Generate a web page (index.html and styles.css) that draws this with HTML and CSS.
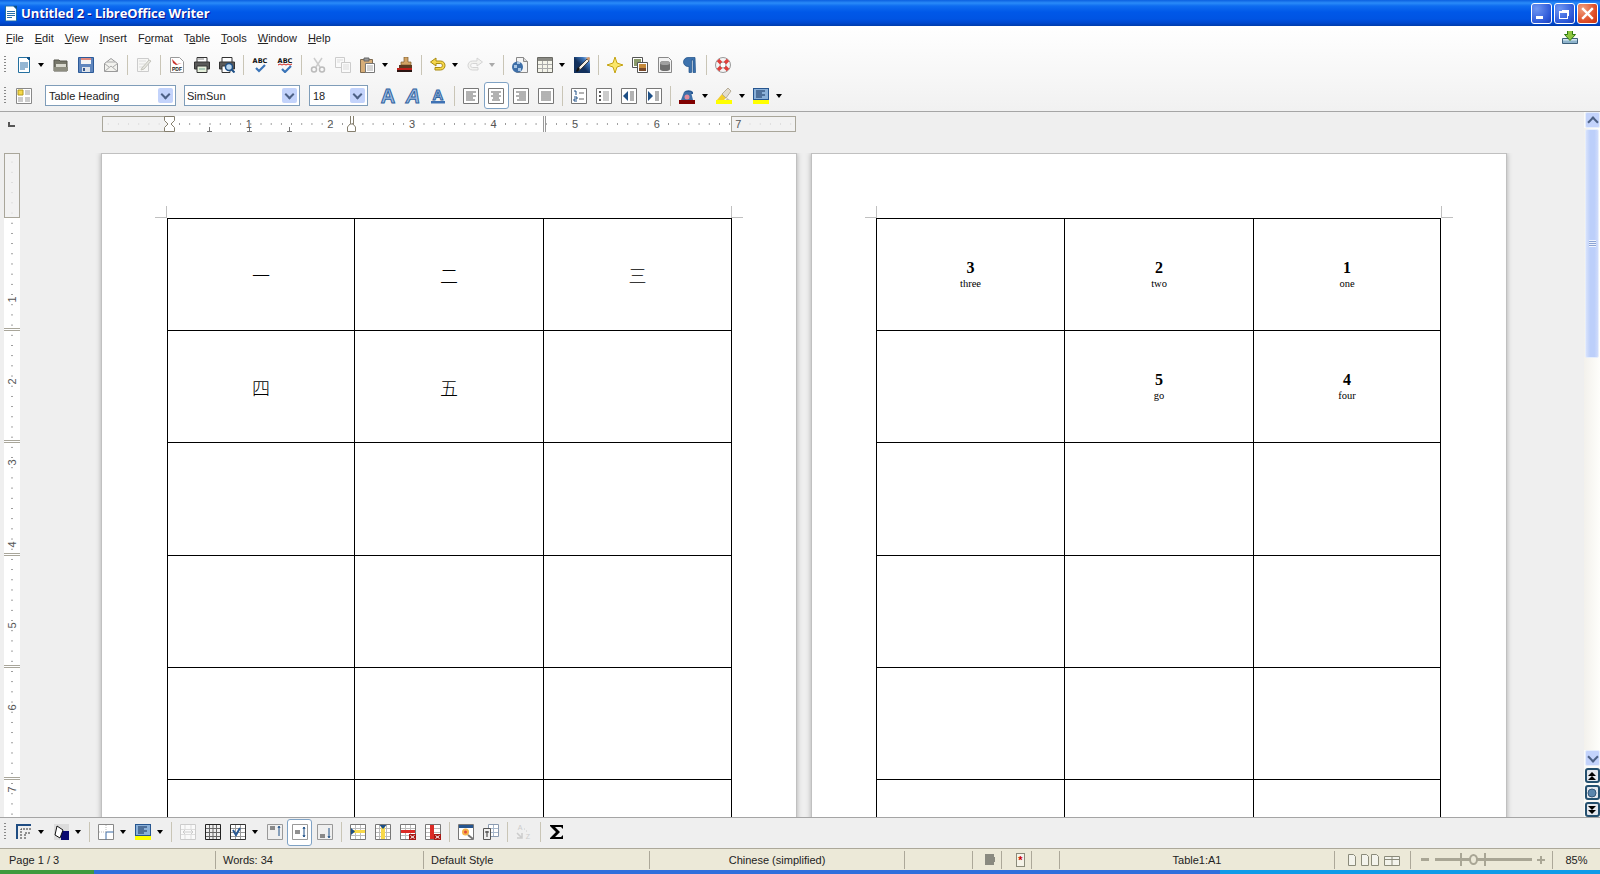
FILE: index.html
```html
<!DOCTYPE html>
<html lang="en">
<head>
  <meta charset="UTF-8" />
  <title>Untitled 2 - LibreOffice Writer</title>
  <link rel="stylesheet" href="styles.css">
</head>
<body>
  <svg class="defs" width="0" height="0">
    <defs>
      <linearGradient id="drawfade" x1="0" y1="1" x2="1" y2="0"><stop offset=".45" stop-color="#12305c"/><stop offset=".75" stop-color="#3f77bb"/><stop offset="1" stop-color="#e8eef8"/></linearGradient>
    </defs>
    <symbol id="new" viewBox="0 0 16 16"><path d="M2.500.5h8l3 3v12h-11z" fill="#fff" stroke="#24709f"/><path d="M10 0h4v4z" fill="#0d4f86"/><path d="M4 6h8M4 8h8M4 10h8M4 12h5" stroke="#2a6fa8"/></symbol>
    <symbol id="open" viewBox="0 0 16 16"><path d="M1 3h5l1 1h7v10H1z" fill="#77776a" stroke="#55554a"/><path d="M3 7h10v3H3z" fill="#d9d9cf"/><path d="M1 10h14v4H1z" fill="#8d8d80"/></symbol>
    <symbol id="save" viewBox="0 0 16 16"><path d="M.5.5h15v15H.5z" fill="#5f86bd" stroke="#2c5a98"/><path d="M3 1h10v6H3z" fill="#f4f4f4"/><path d="M3 1h10v2H3z" fill="#e08a80"/><path d="M4 10h8v5H4z" fill="#dfe4ea"/><path d="M5 11h2v3H5z" fill="#33558a"/></symbol>
    <symbol id="email" viewBox="0 0 16 16"><path d="M1.500 6.500L8 1.500l6.500 5v8h-13z" fill="#f2f2ee" stroke="#999"/><path d="M1.500 14.500L8 9l6.500 5.500M1.500 6.500L6 10M14.500 6.500L10 10M4 5h8" fill="none" stroke="#aaa"/></symbol>
    <symbol id="edit" viewBox="0 0 16 16"><path d="M1.500 1.500h11v13h-11z" fill="#f7f7f5" stroke="#ccc"/><path d="M3 4h7M3 7h6M3 10h4" stroke="#ddd"/><path d="M6 11l7-8 2 1-7 8-3 1z" fill="#e6e6e0" stroke="#c4c4bc"/></symbol>
    <symbol id="pdf" viewBox="0 0 16 16"><path d="M1.500.5h9l4 4v11h-13z" fill="#fff" stroke="#9a9a9a"/><path d="M3 2l5 5 5-1-6 2-3-2z" fill="#c8322d"/></symbol>
    <symbol id="print" viewBox="0 0 16 16"><path d="M3 .5h10v5H3z" fill="#fff" stroke="#333"/><path d="M.5 5h15v7H.5z" fill="#5a5a5a" stroke="#333"/><path d="M3 9h10v6.500H3z" fill="#e6f0dc" stroke="#333"/><path d="M4 2h6" stroke="#888"/><path d="M5 12h6" stroke="#7a9"/></symbol>
    <symbol id="preview" viewBox="0 0 16 16"><path d="M3 .5h10v5H3z" fill="#fff" stroke="#333"/><path d="M.5 5h15v7H.5z" fill="#5a5a5a" stroke="#333"/><path d="M3 9h8v6.500H3z" fill="#fff" stroke="#333"/><circle cx="10" cy="10" r="3.500" fill="#bcd8f0" stroke="#1d4f86" stroke-width="1.500"/><path d="M12.500 12.500l3 3" stroke="#1d4f86" stroke-width="2"/></symbol>
    <symbol id="check" viewBox="0 0 16 16"><path d="M4 11l3 3 6-6" fill="none" stroke="#3a74b8" stroke-width="2.200"/></symbol>
    <symbol id="autocheck" viewBox="0 0 16 16"><path d="M1 8l2-1 2 1 2-1 2 1 2-1 2 1 2-1" fill="none" stroke="#d0261e"/><path d="M5 12l3 3 6-6" fill="none" stroke="#3a74b8" stroke-width="2.200"/></symbol>
    <symbol id="cut" viewBox="0 0 16 16"><path d="M4 1l6 9M12 1l-6 9" stroke="#ccc" stroke-width="1.500"/><circle cx="4" cy="12.500" r="2.500" fill="none" stroke="#bbb" stroke-width="1.500"/><circle cx="12" cy="12.500" r="2.500" fill="none" stroke="#bbb" stroke-width="1.500"/></symbol>
    <symbol id="copy" viewBox="0 0 16 16"><path d="M.5.5h9v10h-9z" fill="#fafafa" stroke="#ccc"/><path d="M6.500 5.500h9v10h-9z" fill="#fafafa" stroke="#ccc"/><path d="M2 3h6M2 5h3M8 8h6M8 10h6M8 12h6" stroke="#ddd"/></symbol>
    <symbol id="paste" viewBox="0 0 16 16"><path d="M.5 2.500h12v13H.5z" fill="#d6ad78" stroke="#7d6a50"/><path d="M4 1h5v3H4z" fill="#999" stroke="#666"/><path d="M5.500 6.500h9v9h-9z" fill="#fff" stroke="#777"/><path d="M7 9h6M7 11h6M7 13h6" stroke="#aaa"/></symbol>
    <symbol id="brush" viewBox="0 0 16 16"><path d="M7 0h4v5h3v3H4V5h3z" fill="#d2a364" stroke="#7d5a2a" stroke-width=".7"/><path d="M2 8h13v3H2z" fill="#5a3a20"/><path d="M0 11h15v2H0z" fill="#c0201a"/><path d="M0 13h15v2H0z" fill="#2a1512"/></symbol>
    <symbol id="undo" viewBox="0 0 16 16"><path d="M.5 5L6 1v3h4.500c6 0 6 9 0 9H5v-2.500h5.500c2.500 0 2.500-4 0-4H6V9z" fill="#f5d64a" stroke="#a88a10"/></symbol>
    <symbol id="redo" viewBox="0 0 16 16"><path d="M15.500 5L10 1v3H5.500c-6 0-6 9 0 9H11v-2.500H5.500c-2.500 0-2.500-4 0-4H10V9z" fill="#f2f2f0" stroke="#d4d4d4"/></symbol>
    <symbol id="hyperlink" viewBox="0 0 16 16"><path d="M4.500.5h7l4 4v11h-11z" fill="#f4f4f4" stroke="#888"/><path d="M11.500.5v4h4" fill="#ddd" stroke="#888"/><circle cx="5.500" cy="10" r="5.500" fill="#3e6fa8"/><path d="M2 8h3v3H2zM6 11h3v3H6zM5 5h3v2H5z" fill="#a9c6e4"/></symbol>
    <symbol id="table" viewBox="0 0 16 16"><path d="M.5.5h15v15H.5z" fill="#f4f4ea" stroke="#6a6a64"/><path d="M1 1h14v3H1z" fill="#8a8a84"/><path d="M1 7.500h14M1 11.500h14M5.500 4v11M10.500 4v11" stroke="#aaa"/></symbol>
    <symbol id="draw" viewBox="0 0 16 16"><path d="M0 0h16v16H0z" fill="url(#drawfade)"/><path d="M13 2l2 2-8 8-3 2 1-4z" fill="#f4efe4" stroke="#222" stroke-width=".8"/><path d="M12 1l3 3 1-3-1-1z" fill="#d49a6a"/><path d="M4 10l2 2-3 3-1-1z" fill="#111"/></symbol>
    <symbol id="star" viewBox="0 0 16 16"><path d="M8 0l2 6 6 2-6 2-2 6-2-6-6-2 6-2z" fill="#fbe76a" stroke="#c5a414"/></symbol>
    <symbol id="gallery" viewBox="0 0 16 16"><path d="M.5.5h10v10H.5z" fill="#fff" stroke="#555"/><path d="M2 2h7v7H2z" fill="#8a9a6a"/><path d="M5.500 5.500h10v10h-10z" fill="#fff" stroke="#555"/><path d="M7 7h7v7H7z" fill="#c68a3a"/><path d="M7 11h7v3H7z" fill="#7a4a2a"/></symbol>
    <symbol id="data" viewBox="0 0 16 16"><path d="M1.500.5h10l3 3v12h-13z" fill="#f2f2f2" stroke="#888"/><path d="M3 6a5 2 0 0 1 10 0v6a5 2 0 0 1-10 0z" fill="#6f6f6f"/><ellipse cx="8" cy="6" rx="5" ry="2" fill="#a0a0a0"/></symbol>
    <symbol id="pilcrow" viewBox="0 0 16 16"><path d="M13 .5H6a4.500 4.500 0 0 0 0 9h1v6h2.500V3H11v12.500h2.500z" fill="#3d72ad" stroke="#1d4f86" stroke-width=".7"/></symbol>
    <symbol id="help" viewBox="0 0 16 16"><circle cx="8" cy="8" r="7.500" fill="#f5f5f5" stroke="#999"/><circle cx="8" cy="8" r="3" fill="#fff" stroke="#999"/><path d="M3 3l3 3M13 3l-3 3M3 13l3-3M13 13l-3-3" stroke="#e0403c" stroke-width="3.500"/></symbol>
    <symbol id="styles" viewBox="0 0 16 16"><path d="M.5.500h15v15H.5z" fill="#fff" stroke="#888"/><path d="M2 2h5v5H2z" fill="#f5d84a" stroke="#b39a1a"/><path d="M9 2h5v5H9zM2 9h5v5H2zM9 9h5v5H9z" fill="#ccc"/></symbol>
    <symbol id="underbar" viewBox="0 0 16 16"><path d="M1 13h14v2.500H1z" fill="#3e72b4"/></symbol>
    <symbol id="left" viewBox="0 0 16 16"><path d="M.5.500h15v15H.5z" fill="#fff" stroke="#777"/><path d="M3 4h10M3 6h7M3 8h10M3 10h7M3 12h9" stroke="#666"/></symbol>
    <symbol id="center" viewBox="0 0 16 16"><path d="M.5.500h15v15H.5z" fill="#fff" stroke="#777"/><path d="M3 4h10M5 6h6M3 8h10M5 10h6M4 12h8" stroke="#666"/></symbol>
    <symbol id="right" viewBox="0 0 16 16"><path d="M.5.500h15v15H.5z" fill="#fff" stroke="#777"/><path d="M3 4h10M6 6h7M3 8h10M6 10h7M4 12h9" stroke="#666"/></symbol>
    <symbol id="justify" viewBox="0 0 16 16"><path d="M.5.500h15v15H.5z" fill="#fff" stroke="#777"/><path d="M3 4h10M3 6h10M3 8h10M3 10h10M3 12h10" stroke="#666"/></symbol>
    <symbol id="num" viewBox="0 0 16 16"><path d="M.5.500h15v15H.5z" fill="#fff" stroke="#777"/><path d="M3 3h2v4M3 9h3v2H3v2h3" fill="none" stroke="#1d4f86"/><path d="M8 5h5M8 11h5" stroke="#666"/></symbol>
    <symbol id="bullet" viewBox="0 0 16 16"><path d="M.5.500h15v15H.5z" fill="#fff" stroke="#777"/><path d="M3 3h2v2H3zM3 7h2v2H3zM3 11h2v2H3z" fill="#555"/><path d="M7 4h6M7 6h6M7 8h6M7 10h6M7 12h6" stroke="#999"/></symbol>
    <symbol id="outdent" viewBox="0 0 16 16"><path d="M.5.500h15v15H.5z" fill="#fff" stroke="#777"/><path d="M7 3v10L2 8z" fill="#1d4f86"/><path d="M9 4h4M9 6h4M9 8h4M9 10h4M9 12h4" stroke="#666"/></symbol>
    <symbol id="indent" viewBox="0 0 16 16"><path d="M.5.500h15v15H.5z" fill="#fff" stroke="#777"/><path d="M2 3v10l5-5z" fill="#1d4f86"/><path d="M9 4h4M9 6h4M9 8h4M9 10h4M9 12h4" stroke="#666"/></symbol>
    <symbol id="fontcolor" viewBox="0 0 16 16"><path d="M0 12h16v4H0z" fill="#800000"/><path d="M2 12l3-8h7l2 8z" fill="#3e6fa8"/><path d="M5 4a5 3 0 0 1 9 0v2h-2V4H7z" fill="#2a5a94"/><circle cx="8" cy="9" r="2.500" fill="#e28a9a"/></symbol>
    <symbol id="highlight" viewBox="0 0 16 16"><path d="M0 12h16v4H0z" fill="#ffff00"/><path d="M1 12l5-6 4 4-2 2z" fill="#f2cf2a"/><path d="M6 6l6-6 3 3-5 7z" fill="#e2dccd" stroke="#a0937a" stroke-width=".7"/><path d="M10 12l1-2 3 2z" fill="#bba"/></symbol>
    <symbol id="bg" viewBox="0 0 16 16"><path d="M0 0h16v12H0z" fill="#26558f"/><path d="M1 1h14v10H1z" fill="#8ab0d8"/><path d="M3 3h9M3 5h6M3 7h9M3 9h6" stroke="#12305c"/><path d="M0 12h16v4H0z" fill="#ffff00"/></symbol>
    <symbol id="borders" viewBox="0 0 16 16"><path d="M1 15V1h14" fill="none" stroke="#1f4c82" stroke-width="2"/><path d="M5 15V5h10M9 15V9h6" fill="none" stroke="#333" stroke-dasharray="2 1"/></symbol>
    <symbol id="fill" viewBox="0 0 16 16"><path d="M1 0h15v16H1z" fill="#dcdcdc"/><path d="M8 7h8v9H8z" fill="#0b0b70"/><path d="M4 2l6 4-3 8-5-3z" fill="#fff" stroke="#111"/></symbol>
    <symbol id="cross" viewBox="0 0 16 16"><path d="M.5.500h15v15H.5z" fill="#fff" stroke="#888"/><path d="M8 8v7.500M8 8h7.500" stroke="#3b6ba6"/><path d="M8 1v7M1 8h7" stroke="#bbb" stroke-dasharray="1 1"/></symbol>
    <symbol id="tmerge" viewBox="0 0 16 16"><path d="M.5.500h15v15H.5z" fill="#fafafa" stroke="#ccc"/><path d="M1 5.500h14M1 10.500h14M5 1v4M11 1v4M5 11v4M11 11v4" stroke="#ddd"/><path d="M3 8h10M3 8l2-2M3 8l2 2M13 8l-2-2M13 8l-2 2" stroke="#ccc" fill="none"/></symbol>
    <symbol id="tsplit" viewBox="0 0 16 16"><path d="M.5.500h15v15H.5z" fill="#eee" stroke="#222"/><path d="M1 4.500h14M1 8.500h14M1 12.500h14M4.500 1v14M8 1v14M11.500 1v14" stroke="#666"/></symbol>
    <symbol id="toptimal" viewBox="0 0 16 16"><path d="M.5.500h15v15H.5z" fill="#fff" stroke="#333"/><path d="M1 4.500h14M1 8.500h14M1 12.500h14M5.500 1v14M10.500 1v14" stroke="#999"/><path d="M3 6l3 5 4-7" fill="none" stroke="#2a5a94" stroke-width="2"/></symbol>
    <symbol id="vtop" viewBox="0 0 16 16"><path d="M.5.500h15M.5 15.500h15M.5.500v15M15.500.500v15" stroke="#999"/><path d="M3 3h5M3 5h5" stroke="#222"/><path d="M12 3v9M11 4l1-2 1 2" stroke="#1d4f86" fill="none"/></symbol>
    <symbol id="vmid" viewBox="0 0 16 16"><path d="M.5.500h15M.5 15.500h15M.5.500v15M15.500.500v15" stroke="#999"/><path d="M3 7h5M3 9h5" stroke="#222"/><path d="M12 3v10M11 5l1-2 1 2M11 11l1 2 1-2" stroke="#1d4f86" fill="none"/></symbol>
    <symbol id="vbot" viewBox="0 0 16 16"><path d="M.5.500h15M.5 15.500h15M.5.500v15M15.500.500v15" stroke="#999"/><path d="M3 11h5M3 13h5" stroke="#222"/><path d="M12 4v9M11 12l1 2 1-2" stroke="#1d4f86" fill="none"/></symbol>
    <symbol id="rowins" viewBox="0 0 16 16"><path d="M.5.500h15v15H.5z" fill="#fff" stroke="#777"/><path d="M1 4.500h14M1 11.500h14M5.500 1v14M10.500 1v14" stroke="#bbb"/><path d="M1 6h14v3H1z" fill="#f8d94a"/><path d="M1 4l4 3.500L1 11z" fill="#1d4f86"/></symbol>
    <symbol id="colins" viewBox="0 0 16 16"><path d="M.5.500h15v15H.5z" fill="#fff" stroke="#777"/><path d="M1 4.500h14M1 8.500h14M1 12.500h14M4.500 1v14M11.500 1v14" stroke="#bbb"/><path d="M6 1h4v14H6z" fill="#f8d94a"/><path d="M4.500 1h7L8 5z" fill="#1d4f86"/></symbol>
    <symbol id="rowdel" viewBox="0 0 16 16"><path d="M.5.500h15v15H.5z" fill="#fff" stroke="#777"/><path d="M1 4.500h14M1 11.500h14M5.500 1v14M10.500 1v14" stroke="#bbb"/><path d="M1 6h14v3H1z" fill="#dc2b26"/><path d="M9 10h7v6H9z" fill="#a81814"/><path d="M10.500 11.500l4 3M14.500 11.500l-4 3" stroke="#fff"/></symbol>
    <symbol id="coldel" viewBox="0 0 16 16"><path d="M.5.500h15v15H.5z" fill="#fff" stroke="#777"/><path d="M1 4.500h14M1 8.500h14M1 12.500h14" stroke="#bbb"/><path d="M5 1h4v14H5z" fill="#dc2b26"/><path d="M9 10h7v6H9z" fill="#a81814"/><path d="M10.500 11.500l4 3M14.500 11.500l-4 3" stroke="#fff"/></symbol>
    <symbol id="autoformat" viewBox="0 0 16 16"><path d="M.5.500h15v15H.5z" fill="#fff" stroke="#777"/><path d="M1 1h14v3H1z" fill="#26558f"/><circle cx="7.500" cy="8" r="3.500" fill="#f5b44a"/><circle cx="7.500" cy="8" r="1.500" fill="#e04a3a"/><path d="M10 11l5 4" stroke="#777" stroke-width="2"/></symbol>
    <symbol id="tprops" viewBox="0 0 16 16"><path d="M5.500.500h10v12h-10z" fill="#fff" stroke="#8a9ab0"/><path d="M6 4.500h9M6 8.500h9M10.500 1v11" stroke="#a8b8cc"/><path d="M.5 4.500h7v11h-7z" fill="#eee" stroke="#555"/><path d="M4 7v6M2 8h4" stroke="#333"/></symbol>
    <symbol id="sortarrow" viewBox="0 0 16 16"><path d="M1 9l5 5M6 9v5H1" fill="none" stroke="#ccc" stroke-width="1.500"/><path d="M8 5h1M10 7h1" stroke="#ccc"/></symbol>
    <symbol id="sigma" viewBox="0 0 16 16"><path d="M1 1h13v4l-2-2H6l5 5-5 5h6l2-2v4H1v-1l6-6-6-6z" fill="#000"/></symbol>
    <symbol id="update" viewBox="0 1 16 14"><path d="M0.500 9.500h15v5H.5z" fill="#8eb4cc" stroke="#3d5f7a"/><path d="M1 10h14v1.500H1z" fill="#d6e6ef"/><path d="M5.500 1.500h5v4h3l-5.500 6-5.500-6h3z" fill="#8dc63f" stroke="#2f7a10"/></symbol>
    <symbol id="hourglass" viewBox="0 0 11 16"><path d="M.5.500h10v4L7 8l3.500 3.500v4H.5v-4L4 8 .5 4.500z" fill="#fff" stroke="#857f6e"/></symbol>
    <symbol id="tabmark" viewBox="0 0 9 16"><path d="M3.500 0v9M6.500 0v9" stroke="#857f6e" stroke-width="1" fill="none"/><path d="M.5 15.500V11L3 8h3l2.500 3v4.500z" fill="#fff" stroke="#857f6e"/></symbol>
    <symbol id="tick" viewBox="0 0 5 5"><path d="M2.500 0v4M0 4.500h5" stroke="#777"/></symbol>
    <symbol id="page1" viewBox="0 0 8 12"><path d="M.5.500h5l2 2v9h-7z" fill="#f3f3ec" stroke="#8a8a7a"/></symbol>
    <symbol id="page2" viewBox="0 0 18 12"><path d="M.5.500h5l2 2v9h-7zM10.500.500h5l2 2v9h-7z" fill="#f3f3ec" stroke="#8a8a7a"/></symbol>
    <symbol id="book" viewBox="0 0 16 12"><path d="M.5 2.500h15v9H.5zM8 2.500V11.500M.5 5.500h15" fill="#f3f3ec" stroke="#8a8a7a"/></symbol>
  </svg>

  <header class="titlebar">
    <svg class="title-icon" viewBox="0 0 16 16"><use href="#new"/></svg>
    <span class="title-text">Untitled 2 - LibreOffice Writer</span>
    <div class="winbtns">
      <span class="winbtn"><i class="w-min"></i></span>
      <span class="winbtn"><i class="w-max"></i></span>
      <span class="winbtn winbtn-close"><svg viewBox="0 0 11 11" width="13" height="13"><path d="M1 1l9 9M10 1l-9 9" stroke="#fff" stroke-width="2"/></svg></span>
    </div>
  </header>

  <div class="chrome">
    <nav class="menubar">
      <span><u>F</u>ile</span><span><u>E</u>dit</span><span><u>V</u>iew</span><span><u>I</u>nsert</span><span>F<u>o</u>rmat</span><span>T<u>a</u>ble</span><span><u>T</u>ools</span><span><u>W</u>indow</span><span><u>H</u>elp</span>
      <svg class="update" viewBox="0 1 16 14"><use href="#update"/></svg>
    </nav>

    <div class="tb tb1">
      <i class="grip"></i>
      <b class="btn"><svg><use href="#new"/></svg></b><i class="arr"></i>
      <b class="btn"><svg><use href="#open"/></svg></b>
      <b class="btn"><svg><use href="#save"/></svg></b>
      <b class="btn"><svg><use href="#email"/></svg></b><i class="sep"></i>
      <b class="btn"><svg><use href="#edit"/></svg></b><i class="sep"></i>
      <b class="btn"><svg viewBox="0 0 16 16"><use href="#pdf" width="16" height="16"/><text x="8" y="14" class="svgpdf">PDF</text></svg></b>
      <b class="btn"><svg><use href="#print"/></svg></b>
      <b class="btn"><svg><use href="#preview"/></svg></b><i class="sep"></i>
      <b class="btn"><svg viewBox="0 0 16 16"><text x="8" y="6" class="svgabc">ABC</text><use href="#check" width="16" height="16"/></svg></b>
      <b class="btn"><svg viewBox="0 0 16 16"><text x="8" y="6" class="svgabc">ABC</text><use href="#autocheck" width="16" height="16"/></svg></b><i class="sep"></i>
      <b class="btn"><svg><use href="#cut"/></svg></b>
      <b class="btn"><svg><use href="#copy"/></svg></b>
      <b class="btn"><svg><use href="#paste"/></svg></b><i class="arr"></i>
      <b class="btn"><svg><use href="#brush"/></svg></b><i class="sep"></i>
      <b class="btn"><svg><use href="#undo"/></svg></b><i class="arr"></i>
      <b class="btn"><svg><use href="#redo"/></svg></b><i class="arr arr-off"></i><i class="sep"></i>
      <b class="btn"><svg><use href="#hyperlink"/></svg></b>
      <b class="btn"><svg><use href="#table"/></svg></b><i class="arr"></i>
      <b class="btn"><svg><use href="#draw"/></svg></b><i class="sep"></i>
      <b class="btn"><svg><use href="#star"/></svg></b>
      <b class="btn"><svg><use href="#gallery"/></svg></b>
      <b class="btn"><svg><use href="#data"/></svg></b>
      <b class="btn"><svg><use href="#pilcrow"/></svg></b><i class="sep"></i>
      <b class="btn"><svg><use href="#help"/></svg></b>
    </div>

    <div class="tb tb2">
      <i class="grip"></i>
      <b class="btn"><svg><use href="#styles"/></svg></b>
      <span class="combo combo-style">Table Heading<i class="combo-btn"></i></span>
      <span class="combo combo-font">SimSun<i class="combo-btn"></i></span>
      <span class="combo combo-size">18<i class="combo-btn"></i></span>
      <b class="btn"><svg viewBox="0 0 16 16"><text x="8" y="15" class="svga">A</text></svg></b>
      <b class="btn"><svg viewBox="0 0 16 16"><text x="8" y="15" class="svga svgi">A</text></svg></b>
      <b class="btn"><svg viewBox="0 0 16 16"><text x="8" y="12" class="svga svgs">A</text><use href="#underbar" width="16" height="16"/></svg></b><i class="sep"></i>
      <b class="btn"><svg><use href="#left"/></svg></b>
      <b class="btn btn-on"><svg><use href="#center"/></svg></b>
      <b class="btn"><svg><use href="#right"/></svg></b>
      <b class="btn"><svg><use href="#justify"/></svg></b><i class="sep"></i>
      <b class="btn"><svg><use href="#num"/></svg></b>
      <b class="btn"><svg><use href="#bullet"/></svg></b>
      <b class="btn"><svg><use href="#outdent"/></svg></b>
      <b class="btn"><svg><use href="#indent"/></svg></b><i class="sep"></i>
      <b class="btn"><svg><use href="#fontcolor"/></svg></b><i class="arr"></i>
      <b class="btn"><svg><use href="#highlight"/></svg></b><i class="arr"></i>
      <b class="btn"><svg><use href="#bg"/></svg></b><i class="arr"></i>
    </div>
  </div>

  <main class="workspace">
    <div class="view">
      <div class="hruler-row">
        <i class="corner"></i>
        <div class="hruler">
          <i class="rul-margin rul-margin-l"></i>
          <i class="rul-margin rul-margin-r"></i>
          <svg class="hr-mark hr-hour"><use href="#hourglass"/></svg>
          <svg class="hr-mark hr-tabm"><use href="#tabmark"/></svg>
          <i class="hr-col"></i>
          <svg class="hr-tick hr-t1"><use href="#tick"/></svg>
          <svg class="hr-tick hr-t2"><use href="#tick"/></svg>
          <svg class="hr-tick hr-t3"><use href="#tick"/></svg>
          <span>1</span><span>2</span><span>3</span><span>4</span><span>5</span><span>6</span><span>7</span>
        </div>
      </div>
      <div class="doc-row">
        <div class="vruler">
          <i class="vrul-margin"></i>
          <i class="vrul-row vr1"></i><i class="vrul-row vr2"></i><i class="vrul-row vr3"></i><i class="vrul-row vr4"></i><i class="vrul-row vr5"></i>
          <span>1</span><span>2</span><span>3</span><span>4</span><span>5</span><span>6</span><span>7</span>
        </div>
        <section class="page">
          <i class="crop crop-l"></i><i class="crop crop-r"></i>
          <table class="grid grid-a">
            <tr><td class="cjk">一</td><td class="cjk">二</td><td class="cjk">三</td></tr>
            <tr><td class="cjk">四</td><td class="cjk">五</td><td></td></tr>
            <tr><td></td><td></td><td></td></tr>
            <tr><td></td><td></td><td></td></tr>
            <tr><td></td><td></td><td></td></tr>
            <tr><td></td><td></td><td></td></tr>
          </table>
        </section>
        <section class="page page-b">
          <i class="crop crop-l"></i><i class="crop crop-r"></i>
          <table class="grid grid-b">
            <tr>
              <td><b class="n">3</b><span class="w">three</span></td>
              <td><b class="n">2</b><span class="w">two</span></td>
              <td><b class="n">1</b><span class="w">one</span></td>
            </tr>
            <tr>
              <td></td>
              <td><b class="n">5</b><span class="w">go</span></td>
              <td><b class="n">4</b><span class="w">four</span></td>
            </tr>
            <tr><td></td><td></td><td></td></tr>
            <tr><td></td><td></td><td></td></tr>
            <tr><td></td><td></td><td></td></tr>
            <tr><td></td><td></td><td></td></tr>
          </table>
        </section>
      </div>
    </div>
    <aside class="scrollbar">
      <i class="sb-btn sb-up"></i>
      <div class="sb-track"><i class="sb-thumb"></i></div>
      <i class="sb-btn sb-down"></i>
      <i class="sb-nav"><svg viewBox="0 0 10 10"><path d="M1 5l4-4 4 4zM1 9l4-4 4 4z" fill="#000"/></svg></i>
      <i class="sb-nav"><svg viewBox="0 0 10 10"><circle cx="5" cy="5" r="4" fill="#5b86ad" stroke="#36597a"/></svg></i>
      <i class="sb-nav"><svg viewBox="0 0 10 10"><path d="M1 1l4 4 4-4zM1 5l4 4 4-4z" fill="#000"/></svg></i>
    </aside>
  </main>

  <div class="tb tb3">
    <i class="grip"></i>
    <b class="btn"><svg><use href="#borders"/></svg></b><i class="arr"></i>
    <b class="btn"><svg><use href="#fill"/></svg></b><i class="arr"></i><i class="sep"></i>
    <b class="btn"><svg><use href="#cross"/></svg></b><i class="arr"></i>
    <b class="btn"><svg><use href="#bg"/></svg></b><i class="arr"></i><i class="sep"></i>
    <b class="btn"><svg><use href="#tmerge"/></svg></b>
    <b class="btn"><svg><use href="#tsplit"/></svg></b>
    <b class="btn"><svg><use href="#toptimal"/></svg></b><i class="arr"></i>
    <b class="btn"><svg><use href="#vtop"/></svg></b>
    <b class="btn btn-on"><svg><use href="#vmid"/></svg></b>
    <b class="btn"><svg><use href="#vbot"/></svg></b><i class="sep"></i>
    <b class="btn"><svg><use href="#rowins"/></svg></b>
    <b class="btn"><svg><use href="#colins"/></svg></b>
    <b class="btn"><svg><use href="#rowdel"/></svg></b>
    <b class="btn"><svg><use href="#coldel"/></svg></b><i class="sep"></i>
    <b class="btn"><svg><use href="#autoformat"/></svg></b>
    <b class="btn"><svg><use href="#tprops"/></svg></b><i class="sep"></i>
    <b class="btn"><svg viewBox="0 0 16 16"><text x="4" y="6" class="svgsort">A</text><text x="12" y="15" class="svgsort">Z</text><use href="#sortarrow" width="16" height="16"/></svg></b><i class="sep"></i>
    <b class="btn"><svg><use href="#sigma"/></svg></b>
  </div>

  <footer class="statusbar">
    <span class="st st-page">Page 1 / 3</span>
    <span class="st st-words">Words: 34</span>
    <span class="st st-style">Default Style</span>
    <span class="st st-lang">Chinese (simplified)</span>
    <span class="st st-ins"></span>
    <span class="st st-sel"><i class="sel-box"></i></span>
    <span class="st st-mod"><i class="mod-doc">*</i></span>
    <span class="st st-sig"></span>
    <span class="st st-cell">Table1:A1</span>
    <span class="st st-views">
      <svg width="8" height="12"><use href="#page1"/></svg>
      <svg width="18" height="12"><use href="#page2"/></svg>
      <svg width="16" height="12"><use href="#book"/></svg>
    </span>
    <span class="st st-zoom">
      <i class="z-minus"></i>
      <i class="z-track"><i class="z-tick"></i><i class="z-knob"></i><i class="z-tick z-tick2"></i></i>
      <i class="z-plus"></i>
    </span>
    <span class="st st-pct">85%</span>
  </footer>
  <div class="taskbar"><i class="start"></i><i class="tray"></i></div>
</body>
</html>
```

FILE: styles.css
```css
* { box-sizing: border-box; }
html, body { margin: 0; height: 100%; }
body {
  width: 1600px;
  height: 874px;
  overflow: hidden;
  display: flex;
  flex-direction: column;
  font-family: "Liberation Sans", "Noto Sans", sans-serif;
  font-size: 11px;
  color: #000;
  background: #efefef;
}
i, b { font-style: normal; font-weight: normal; display: block; }
.defs { position: absolute; }
.svgpdf { font: bold 5px "Liberation Sans", sans-serif; text-anchor: middle; fill: #222; }
.svgabc { font: bold 6.500px "DejaVu Sans", sans-serif; text-anchor: middle; fill: #111; }
.svga { font: bold 20px "Liberation Sans", sans-serif; text-anchor: middle; fill: #9dbce4; stroke: #2f639f; stroke-width: 1; }
.svgi { font-style: italic; }
.svgs { font-size: 15px; }
.svgsort { font: 7px "Liberation Sans", sans-serif; text-anchor: middle; fill: #ccc; }

/* title bar */
.titlebar {
  height: 26px;
  flex: none;
  display: flex;
  align-items: center;
  padding-left: 3px;
  background: linear-gradient(#0b5fe0 0, #2a8bf8 3px, #0e6cf0 6px, #0058e8 12px, #0054e3 19px, #0048cf 23px, #003cab 26px);
}
.title-icon { width: 16px; height: 17px; }
.title-text {
  margin-left: 2px;
  color: #fff;
  font: bold 13px "Open Sans", sans-serif;
  letter-spacing: -0.12px;
  text-shadow: 1px 1px 0 #0f1089;
}
.winbtns { margin-left: auto; display: flex; gap: 2px; padding-right: 2px; }
.winbtn {
  width: 21px;
  height: 21px;
  border: 1px solid #fff;
  border-radius: 3px;
  background: radial-gradient(circle at 25% 25%, #6f96f2, #2c58d8 70%, #1c3fb8);
  display: flex;
  align-items: center;
  justify-content: center;
  position: relative;
}
.winbtn-close { background: radial-gradient(circle at 25% 25%, #f0a080, #e0512a 60%, #c8300e); }
.w-min { width: 7px; height: 3px; background: #fff; margin: 8px 5px 0 0; }
.w-max { width: 9px; height: 8px; border: 1px solid #fff; border-top-width: 2px; margin: 3px 3px 0 0; box-shadow: 2px -2px 0 -1px #fff; }

/* menus and top toolbars */
.chrome {
  flex: none;
  height: 86px;
  background: linear-gradient(#fff, #f1f1f1);
  border-bottom: 1px solid #a5a5a5;
}
.menubar {
  height: 24px;
  display: flex;
  align-items: center;
  gap: 11px;
  padding: 0 22px 0 6px;
  font-size: 11px;
  color: #222;
}
.update { width: 16px; height: 14px; margin-left: auto; }
.tb { display: flex; align-items: center; padding-left: 3px; }
.tb1 { height: 30px; }
.tb2 { height: 31px; }
.grip {
  width: 8px;
  height: 18px;
  margin-right: 0;
  background: repeating-linear-gradient(#888 0 1px, transparent 1px 3px) 1px 0 / 2px 100% no-repeat;
}
.btn {
  width: 25px;
  height: 25px;
  flex: none;
  display: flex;
  align-items: center;
  justify-content: center;
}
.btn svg { width: 16px; height: 16px; overflow: visible; }
.btn-on { height: 27px; border: 1px solid #7fa2c4; border-radius: 3px; background: #fff; }
.arr { width: 12px; height: 4px; flex: none; position: relative; }
.arr::after {
  content: "";
  position: absolute;
  left: 2px;
  top: 0;
  border-left: 3.500px solid transparent;
  border-right: 3.500px solid transparent;
  border-top: 4px solid #000;
}
.arr-off::after { border-top-color: #aaa; }
.sep { width: 8px; height: 20px; flex: none; background: linear-gradient(#c9c5b6, #c9c5b6) center / 1px 100% no-repeat; }
.combo {
  height: 21px;
  flex: none;
  border: 1px solid #7f9db9;
  background: #fff;
  display: flex;
  align-items: center;
  justify-content: space-between;
  padding: 1px 0 0 3px;
  font-size: 11px;
  color: #222;
}
.combo-style { width: 131px; margin-left: 9px; }
.combo-font { width: 116px; margin-left: 8px; padding-left: 2px; }
.combo-size { width: 59px; margin: 0 7.500px 0 9px; }
.combo-btn {
  width: 15px;
  height: 15px;
  margin: -1px 2px 0 0;
  border-radius: 2px;
  background: #c3d3fb;
  position: relative;
}
.combo-btn::after {
  content: "";
  position: absolute;
  left: 4px;
  top: 3px;
  width: 5px;
  height: 5px;
  border-right: 2px solid #4d6185;
  border-bottom: 2px solid #4d6185;
  transform: rotate(45deg);
}

/* workspace */
.workspace { flex: 1; min-height: 0; display: flex; }
.view { flex: 1; min-width: 0; display: flex; flex-direction: column; overflow: hidden; }
.hruler-row { height: 41px; flex: none; padding: 4px 0 0 8px; display: flex; align-items: flex-start; }
.corner { width: 7px; height: 5px; margin-top: 6px; border-left: 2px solid #555; border-bottom: 2px solid #555; flex: none; }
.hruler {
  width: 694px;
  height: 16px;
  margin-left: 87px;
  padding-left: 106px;
  position: relative;
  display: flex;
  background:
    radial-gradient(circle, #999 0 .7px, transparent 1px) 1.100px 0 / 10.200px 100% repeat-x,
    #fff;
  font-size: 11px;
  color: #555;
  line-height: 16px;
}
.hruler span { width: 81.600px; flex: none; text-align: center; position: relative; }
.rul-margin { position: absolute; top: 0; height: 16px; background: rgba(239,239,239,.8); border: 1px solid #a9a69a; }
.rul-margin-l { left: 0; width: 66px; }
.rul-margin-r { left: 629px; width: 65px; }
.hr-mark { position: absolute; top: 0; height: 16px; }
.hr-hour { left: 62px; width: 11px; }
.hr-tabm { left: 245px; width: 9px; }
.hr-col { position: absolute; left: 441px; top: 0; width: 3px; height: 16px; border-left: 1px solid #999; border-right: 1px solid #999; }
.hr-tick { position: absolute; top: 11px; width: 5px; height: 5px; }
.hr-t1 { left: 105px; }
.hr-t2 { left: 145px; }
.hr-t3 { left: 185px; }

.doc-row { flex: 1; min-height: 0; display: flex; align-items: flex-start; overflow: hidden; padding: 0 0 0 4px; }
.vruler {
  width: 16px;
  height: 664px;
  flex: none;
  position: relative;
  padding-top: 106px;
  background:
    radial-gradient(circle, #999 0 .7px, transparent 1px) 0 4px / 100% 10.200px repeat-y,
    #fff;
  color: #555;
}
.vruler span {
  display: block;
  height: 81.600px;
  line-height: 16px;
  text-align: center;
  writing-mode: vertical-rl;
  transform: rotate(180deg);
  font-size: 11px;
}
.vrul-margin { position: absolute; left: 0; top: 0; width: 16px; height: 65px; border: 1px solid #a9a69a; background: rgba(239,239,239,.8); }
.vrul-row { position: absolute; left: 0; width: 16px; height: 3px; border-top: 1px solid #a9a69a; border-bottom: 1px solid #a9a69a; }
.vr1 { top: 175px; }
.vr2 { top: 287px; }
.vr3 { top: 400px; }
.vr4 { top: 512px; }
.vr5 { top: 624px; }

.page {
  width: 696px;
  height: 760px;
  flex: none;
  margin-left: 81px;
  padding: 64px 0 0 65px;
  background: #fff;
  border: 1px solid #c0c0c0;
  border-width: 1px 1px 0 1px;
  box-shadow: 0 0 5px #aaa;
  position: relative;
}
.page-b { margin-left: 14px; padding-left: 64px; }
.crop { position: absolute; top: 52px; width: 12px; height: 12px; border-bottom: 1px solid #c0c0c0; }
.crop-l { left: 53px; border-right: 1px solid #c0c0c0; }
.crop-r { left: 629px; border-left: 1px solid #c0c0c0; }
.grid { border-collapse: collapse; table-layout: fixed; width: 565px; }
.grid td {
  height: 112px;
  padding: 0;
  border: 1px solid #000;
  text-align: center;
  vertical-align: middle;
}
.grid tr:nth-child(3) td { height: 113px; }
.grid-a td:nth-child(1) { width: 187px; }
.grid-a td:nth-child(2) { width: 189px; }
.grid-b td:nth-child(1) { width: 188px; }
.grid-b td:nth-child(2) { width: 189px; }
.cjk { font: 300 18px "Noto Sans CJK SC", sans-serif; }
.n { display: block; font: bold 16px/18px "Liberation Serif", serif; }
.w { display: block; font: 10.500px/13px "Liberation Serif", serif; padding-bottom: 1px; }

/* scrollbar */
.scrollbar { width: 16px; flex: none; display: flex; flex-direction: column; align-items: center; background: #fbfbf8; }
.sb-btn { width: 15px; height: 16px; flex: none; background: #c3d3fb; border: 1px solid #e6eefc; border-radius: 2px; position: relative; }
.sb-btn::after {
  content: "";
  position: absolute;
  left: 3.500px;
  width: 6px;
  height: 6px;
  border-left: 2px solid #4d6185;
  border-top: 2px solid #4d6185;
}
.sb-up::after { top: 5px; transform: rotate(45deg); }
.sb-down::after { top: 2px; transform: rotate(225deg); }
.sb-track { flex: 1; width: 100%; background: linear-gradient(90deg, #f3f1ec, #fefefb); }
.sb-thumb {
  height: 229px;
  margin: 1px 1px 0 1px;
  background: linear-gradient(90deg, #d8e2fc, #bccffa 35%, #bccffa 70%, #d0dcfb);
  border: 1px solid #e6eefc;
  border-radius: 2px;
  position: relative;
}
.sb-thumb::after {
  content: "";
  position: absolute;
  left: 3px;
  top: 110px;
  width: 7px;
  height: 7px;
  background: repeating-linear-gradient(#eef3fe 0 1px, #8ca4d4 1px 2px);
}
.sb-nav {
  width: 15px;
  height: 15px;
  flex: none;
  margin-top: 2px;
  border: 2px solid #24506f;
  border-radius: 3px;
  background: #e4e8ee;
  display: flex;
  align-items: center;
  justify-content: center;
}
.sb-nav svg { width: 10px; height: 10px; }

/* bottom */
.tb3 { height: 31px; flex: none; padding-bottom: 2px; border-top: 1px solid #a5a5a5; background: #efefef; }
.statusbar {
  height: 22px;
  flex: none;
  display: flex;
  align-items: center;
  background: #ece9d8;
  border-top: 1px solid #aca899;
  color: #222;
  font-size: 11px;
}
.st {
  height: 18px;
  flex: none;
  display: flex;
  align-items: center;
  justify-content: center;
  border-right: 1px solid #aca899;
}
.st-page { width: 216px; justify-content: flex-start; padding-left: 9px; }
.st-words { width: 208px; justify-content: flex-start; padding-left: 7px; }
.st-style { width: 226px; justify-content: flex-start; padding-left: 7px; }
.st-lang { width: 255px; }
.st-ins { width: 68px; }
.st-sel { width: 29px; padding-left: 4px; }
.st-mod { width: 30px; padding-left: 8px; }
.st-sig { width: 28px; }
.st-cell { width: 275px; }
.st-views { width: 76px; gap: 5px; padding-left: 2px; }
.st-zoom { width: 142px; position: relative; justify-content: flex-start; padding-left: 10px; }
.st-pct { flex: 1; border-right: none; }
.sel-box { width: 9px; height: 11px; background: #8a8a80; box-shadow: 4px 0 0 -3px #8a8a80; }
.mod-doc {
  width: 9px;
  height: 14px;
  border: 1px solid #8a8a7a;
  background: #f5f3e8;
  color: #c00;
  font: bold 11px/12px "Liberation Sans", sans-serif;
  text-align: center;
}
.z-minus { width: 8px; height: 3px; background: #a9a695; }
.z-track { width: 97px; height: 3px; margin: 0 5px 0 6px; background: #a9a695; position: relative; }
.z-tick { position: absolute; left: 25px; top: -5px; width: 2px; height: 13px; background: #a9a695; }
.z-tick2 { left: 49px; }
.z-knob { position: absolute; left: 34px; top: -4px; width: 9px; height: 11px; border: 2px solid #a9a695; border-radius: 50%; background: #ece9d8; }
.z-plus { width: 8px; height: 8px; background: linear-gradient(#a9a695, #a9a695) center / 8px 2px no-repeat, linear-gradient(#a9a695, #a9a695) center / 2px 8px no-repeat; }
.taskbar { height: 4px; flex: none; display: flex; background: #2f6fdc; }
.start { width: 94px; background: #3f9a3f; }
.tray { margin-left: auto; width: 380px; background: #0f9be8; }
```
